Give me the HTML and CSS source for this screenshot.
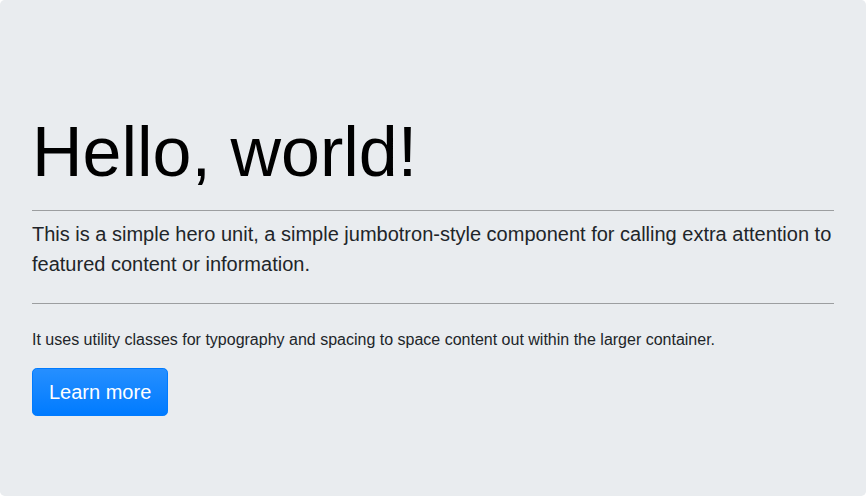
FILE: index.html
```html
<!DOCTYPE html>
<html lang="en">
<head>
<meta charset="utf-8">
<title>Jumbotron</title>
<link rel="stylesheet" href="styles.css">
</head>
<body>
<div class="jumbotron">
  <h1 class="display">Hello, world!</h1>
  <hr class="rule rule-top">
  <p class="lead">This is a simple hero unit, a simple jumbotron-style component for calling extra attention to featured content or information.</p>
  <hr class="rule rule-mid">
  <p class="body-text">It uses utility classes for typography and spacing to space content out within the larger container.</p>
  <a class="btn" href="#" role="button">Learn more</a>
</div>
</body>
</html>
```

FILE: styles.css
```css
html, body {
  margin: 0;
  padding: 0;
}
body {
  font-family: "Liberation Sans", Arial, sans-serif;
  color: #212529;
  background: #fff;
  font-size: 16px;
  line-height: 1.5;
}
.jumbotron {
  box-sizing: border-box;
  height: 496px;
  padding: 110px 32px 0;
  background: #e9ecef;
  border-radius: 4.8px;
}
.display {
  margin: 0;
  font-size: 70px;
  font-weight: 300;
  line-height: 84px;
  color: #000;
}
.rule {
  border: 0;
  border-top: 1px solid rgba(0, 0, 0, 0.33);
  height: 0;
  margin: 0;
}
.rule-top {
  margin: 16px 0 8px;
}
.rule-mid {
  margin: 24px 0 24px;
}
.lead {
  margin: 0;
  font-size: 20px;
  font-weight: 300;
  line-height: 30px;
}
.body-text {
  margin: 0 0 16px;
  font-size: 16px;
  line-height: 24px;
}
.btn {
  display: inline-block;
  padding: 8px 16px;
  font-size: 20px;
  line-height: 30px;
  color: #fff;
  text-decoration: none;
  background: #007bff linear-gradient(180deg, #268fff, #007bff) repeat-x;
  border: 1px solid #007bff;
  border-radius: 4.8px;
}
```
